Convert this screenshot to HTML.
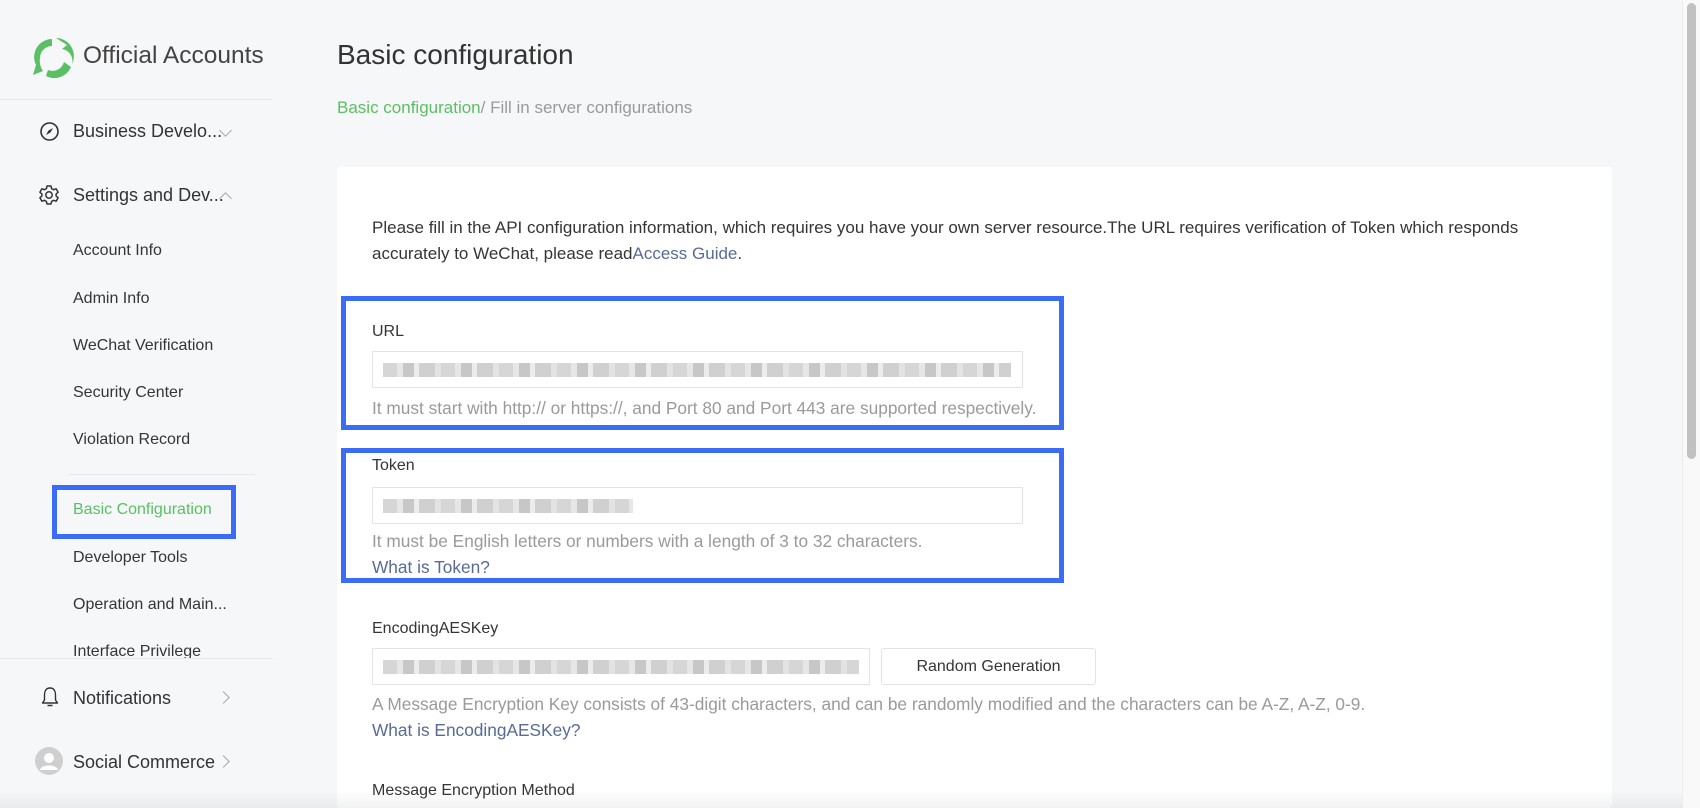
<!DOCTYPE html>
<html><head><meta charset="utf-8"><style>
*{margin:0;padding:0;box-sizing:border-box}
html,body{width:1700px;height:808px;overflow:hidden}
body{background:#f6f7f9;font-family:"Liberation Sans",sans-serif;color:#353535;position:relative}
.a{position:absolute;white-space:nowrap}
.side{position:absolute;left:0;top:0;width:273px;height:808px;background:#f6f7f9}
.hr{position:absolute;height:1px;background:#e7e8ea}
.nav{font-size:18px;color:#333;line-height:20px}
.sub{font-size:16px;color:#353535;line-height:18px;left:73px}
.card{position:absolute;left:337px;top:167px;width:1275px;height:641px;background:#fff;border-radius:3px}
.t16{font-size:16px;line-height:18px}
.hint{font-size:17.3px;color:#9a9a9a;line-height:18px}
.link{color:#576b95}
.inp{position:absolute;border:1px solid #e4e4e4;background:#fff}
.blur{position:absolute;height:14px;background:repeating-linear-gradient(90deg,#cfcfcf 0 14px,#e2e2e2 14px 20px,#bdbdbd 20px 31px,#e8e8e8 31px 36px,#c8c8c8 36px 52px,#dedede 52px 58px);opacity:.85}
.box{position:absolute;border:5px solid #3a6cf5}
.chev{position:absolute;width:9px;height:9px;border-right:1.5px solid #aaa;border-bottom:1.5px solid #aaa}
</style></head><body>
<div class="side">
  <svg class="a" style="left:31px;top:37px" width="43" height="41" viewBox="0 0 43 41">
    <path d="M21 2 A18 18 0 0 0 5 28 L2 38 L12 34 A18 18 0 0 1 9 21 A12 12 0 0 1 21 9 Z" fill="#5bbf63"/>
    <path d="M25 1 A18 18 0 0 1 41 27 A12 12 0 0 0 31 12 L36 8 Z" fill="#5bbf63"/>
    <path d="M40 30 A18 18 0 0 1 15 39 L17 33 A12 12 0 0 0 33 25 Z" fill="#5bbf63"/>
  </svg>
  <div class="a" style="left:83px;top:40px;font-size:24.5px;color:#444;line-height:32px">Official Accounts</div>
  <div class="hr" style="left:0;top:99px;width:273px"></div>
  <svg class="a" style="left:39px;top:121px" width="21" height="21" viewBox="0 0 21 21"><circle cx="10.5" cy="10.5" r="8.5" fill="none" stroke="#333" stroke-width="1.6"/><path d="M14 7 L11.5 11.5 L7 14 L9.5 9.5 Z" fill="#333"/></svg>
  <div class="a nav" style="left:73px;top:121px">Business Develo...</div>
  <div class="chev" style="left:221px;top:126px;transform:rotate(45deg)"></div>
  <svg class="a" style="left:38px;top:184px" width="22" height="22" viewBox="0 0 22 22"><path d="M9 2h4l.6 2.6 2 1.1 2.5-.9 2 3.4-2 1.8v2l2 1.8-2 3.4-2.5-.9-2 1.1L13 20H9l-.6-2.6-2-1.1-2.5.9-2-3.4 2-1.8v-2l-2-1.8 2-3.4 2.5.9 2-1.1z" fill="none" stroke="#333" stroke-width="1.5" stroke-linejoin="round"/><circle cx="11" cy="11" r="3.2" fill="none" stroke="#333" stroke-width="1.5"/></svg>
  <div class="a nav" style="left:73px;top:185px">Settings and Dev...</div>
  <div class="chev" style="left:221px;top:194px;transform:rotate(-135deg)"></div>
  <div class="a sub" style="top:242px">Account Info</div>
  <div class="a sub" style="top:290px">Admin Info</div>
  <div class="a sub" style="top:337px">WeChat Verification</div>
  <div class="a sub" style="top:384px">Security Center</div>
  <div class="a sub" style="top:431px">Violation Record</div>
  <div class="hr" style="left:69px;top:474px;width:186px"></div>
  <div class="a sub" style="top:501px;color:#5bbf63">Basic Configuration</div>
  <div class="box" style="left:52px;top:485px;width:184px;height:54px"></div>
  <div class="a sub" style="top:549px">Developer Tools</div>
  <div class="a sub" style="top:596px">Operation and Main...</div>
  <div class="a sub" style="top:643px;height:15px;overflow:hidden">Interface Privilege</div>
  <div class="hr" style="left:0;top:658px;width:273px"></div>
  <svg class="a" style="left:40px;top:686px" width="20" height="22" viewBox="0 0 20 22"><path d="M10 2 C5.5 2 4.5 6 4.5 9 V14 L2.5 17 H17.5 L15.5 14 V9 C15.5 6 14.5 2 10 2Z M7.5 19.5 H12.5" fill="none" stroke="#333" stroke-width="1.4" stroke-linejoin="round"/></svg>
  <div class="a nav" style="left:73px;top:688px">Notifications</div>
  <div class="chev" style="left:219px;top:693px;transform:rotate(-45deg)"></div>
  <svg class="a" style="left:35px;top:747px" width="28" height="28" viewBox="0 0 28 28"><circle cx="14" cy="14" r="14" fill="#cfcfcf"/><circle cx="14" cy="11" r="5" fill="#fff"/><path d="M5 23 C6 17 22 17 23 23 Z" fill="#fff"/></svg>
  <div class="a nav" style="left:73px;top:752px">Social Commerce</div>
  <div class="chev" style="left:219px;top:757px;transform:rotate(-45deg)"></div>
</div>

<div class="a" style="left:337px;top:38px;font-size:28px;color:#333;line-height:34px">Basic configuration</div>
<div class="a" style="left:337px;top:98px;font-size:17px;color:#9a9a9a"><span style="color:#5bbf63">Basic configuration</span>/ Fill in server configurations</div>

<div class="card"></div>
<div class="a" style="left:372px;top:215px;font-size:17px;line-height:26px;white-space:normal;width:1200px;color:#353535">Please fill in the API configuration information, which requires you have your own server resource.The URL requires verification of Token which responds accurately to WeChat, please read<span class="link">Access Guide</span>.</div>

<div class="a t16" style="left:372px;top:323px">URL</div>
<div class="inp" style="left:372px;top:351px;width:651px;height:37px"><div class="blur" style="left:10px;top:11px;width:628px"></div></div>
<div class="a hint" style="left:372px;top:399px">It must start with http:// or https://, and Port 80 and Port 443 are supported respectively.</div>
<div class="box" style="left:341px;top:296px;width:723px;height:134px"></div>

<div class="a t16" style="left:372px;top:457px">Token</div>
<div class="inp" style="left:372px;top:487px;width:651px;height:37px"><div class="blur" style="left:10px;top:11px;width:250px"></div></div>
<div class="a hint" style="left:372px;top:532px">It must be English letters or numbers with a length of 3 to 32 characters.</div>
<div class="a hint" style="left:372px;top:558px;color:#576b95">What is Token?</div>
<div class="box" style="left:341px;top:448px;width:723px;height:135px"></div>

<div class="a t16" style="left:372px;top:620px">EncodingAESKey</div>
<div class="inp" style="left:372px;top:648px;width:498px;height:37px"><div class="blur" style="left:10px;top:11px;width:476px"></div></div>
<div class="inp" style="left:881px;top:648px;width:215px;height:37px;border-radius:3px;font-size:16px;text-align:center;line-height:35px;color:#353535">Random Generation</div>
<div class="a hint" style="left:372px;top:695px">A Message Encryption Key consists of 43-digit characters, and can be randomly modified and the characters can be A-Z, A-Z, 0-9.</div>
<div class="a hint" style="left:372px;top:721px;color:#576b95">What is EncodingAESKey?</div>
<div class="a t16" style="left:372px;top:782px">Message Encryption Method</div>
<div class="a" style="left:0;top:790px;width:1682px;height:18px;background:linear-gradient(rgba(0,0,0,0),rgba(0,0,0,.05))"></div>

<div class="a" style="left:1682px;top:0;width:18px;height:808px;background:#f9f9f9;border-left:1px solid #ececec"></div>
<div class="a" style="left:1687px;top:3px;width:9px;height:456px;background:#c1c1c1;border-radius:5px"></div>
</body></html>
